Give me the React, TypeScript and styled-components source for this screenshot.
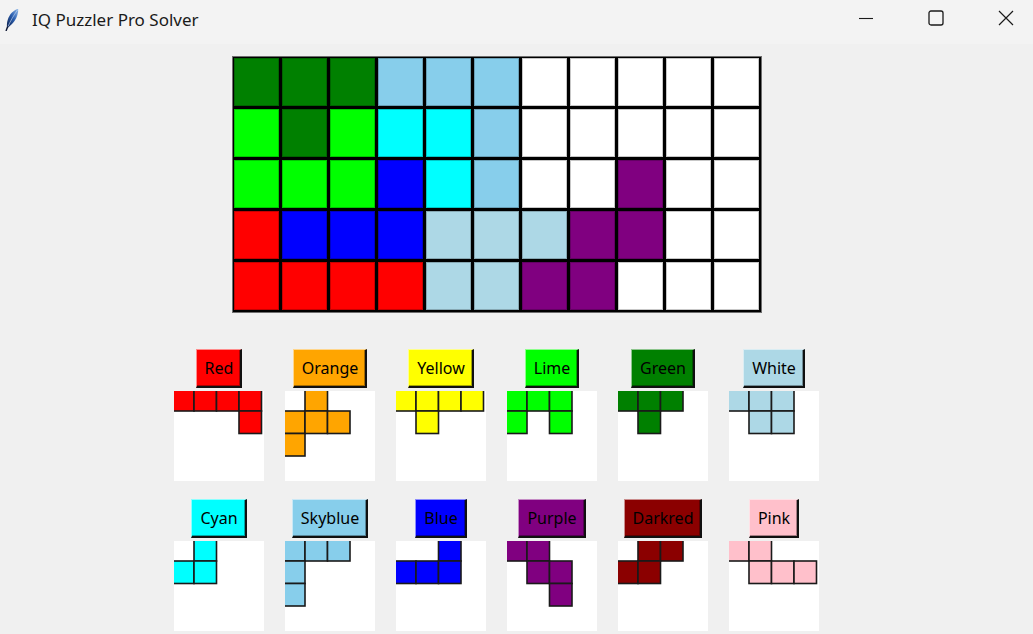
import React from "react";
import styled, { createGlobalStyle } from "styled-components";

const GlobalStyle = createGlobalStyle`
  html, body { margin: 0; padding: 0; }
  body {
    background: #f0f0f0;
    font-family: "Noto Sans", "Open Sans", sans-serif;
    overflow: hidden;
  }
`;

const Window = styled.div`
  width: 1033px;
  height: 634px;
  display: flex;
  flex-direction: column;
  background: #f0f0f0;
  overflow: hidden;
`;

const TitleBar = styled.div`
  height: 44px;
  flex: none;
  display: flex;
  align-items: center;
  background: #f3f3f3;
  overflow: hidden;
`;

const AppIcon = styled.svg`
  width: 16px;
  height: 24px;
  margin-left: 4px;
  margin-right: 12px;
  margin-top: -6px;
  flex: none;
`;

const Title = styled.div`
  font-size: 17px;
  color: #1a1a1a;
  margin-top: -6px;
  flex: 1;
`;

const Captions = styled.div`
  display: flex;
  height: 100%;
  margin-right: -8px;
`;

const CaptionButton = styled.div`
  width: 70px;
  height: 100%;
  display: flex;
  align-items: center;
  justify-content: center;
  padding-bottom: 8px;
  box-sizing: border-box;
`;

const Main = styled.div`
  flex: 1;
  display: flex;
  flex-direction: column;
  align-items: center;
  padding-right: 40px;
  padding-top: 12px;
`;

const Board = styled.div`
  border: 1px solid #6f6f6f;
  background: #000;
  padding: 1px 2px 2px 1px;
  display: grid;
  grid-template-columns: repeat(11, 45px);
  grid-template-rows: repeat(5, 48px);
  gap: 3px;
`;

const Cell = styled.div<{ $c: string }>`
  background: ${(p) => p.$c};
  box-shadow: inset 0 0 0 1px rgba(0, 0, 0, 0.22);
`;

const Pieces = styled.div`
  margin-top: 36px;
  display: flex;
  flex-direction: column;
  gap: 18px;
`;

const PieceRow = styled.div`
  display: flex;
  gap: 21px;
`;

const PieceItem = styled.div`
  width: 90px;
  display: flex;
  flex-direction: column;
  align-items: center;
  gap: 3px;
`;

const ColorButton = styled.div<{ $c: string }>`
  height: 39px;
  box-sizing: border-box;
  padding: 0 7px 0 8px;
  display: flex;
  align-items: center;
  justify-content: center;
  background: ${(p) => p.$c};
  border-style: solid;
  border-width: 1px 2px 2px 1px;
  border-color: rgba(255, 255, 255, 0.55) #101010 #101010 rgba(255, 255, 255, 0.55);
  box-shadow: inset -1px -1px 0 rgba(0, 0, 0, 0.35);
  font-size: 16px;
  color: #000;
  white-space: nowrap;
`;

const Canvas = styled.svg`
  width: 90px;
  height: 90px;
  background: #fff;
  display: block;
`;

const C = {
  red: "#ff0000",
  orange: "#ffa500",
  yellow: "#ffff00",
  lime: "#00ff00",
  green: "#008000",
  lb: "#add8e6",
  cyan: "#00ffff",
  sky: "#87ceeb",
  blue: "#0000ff",
  purple: "#800080",
  dred: "#8b0000",
  pink: "#ffc0cb",
  w: "#ffffff",
};

const boardRows: string[][] = [
  [C.green, C.green, C.green, C.sky, C.sky, C.sky, C.w, C.w, C.w, C.w, C.w],
  [C.lime, C.green, C.lime, C.cyan, C.cyan, C.sky, C.w, C.w, C.w, C.w, C.w],
  [C.lime, C.lime, C.lime, C.blue, C.cyan, C.sky, C.w, C.w, C.purple, C.w, C.w],
  [C.red, C.blue, C.blue, C.blue, C.lb, C.lb, C.lb, C.purple, C.purple, C.w, C.w],
  [C.red, C.red, C.red, C.red, C.lb, C.lb, C.purple, C.purple, C.w, C.w, C.w],
];

type Piece = { name: string; color: string; cells: [number, number][] };

const row1: Piece[] = [
  { name: "Red", color: C.red, cells: [[0, 0], [0, 1], [0, 2], [0, 3], [1, 3]] },
  { name: "Orange", color: C.orange, cells: [[0, 1], [1, 0], [1, 1], [1, 2], [2, 0]] },
  { name: "Yellow", color: C.yellow, cells: [[0, 0], [0, 1], [0, 2], [0, 3], [1, 1]] },
  { name: "Lime", color: C.lime, cells: [[0, 0], [0, 1], [0, 2], [1, 0], [1, 2]] },
  { name: "Green", color: C.green, cells: [[0, 0], [0, 1], [0, 2], [1, 1]] },
  { name: "White", color: C.lb, cells: [[0, 0], [0, 1], [0, 2], [1, 1], [1, 2]] },
];

const row2: Piece[] = [
  { name: "Cyan", color: C.cyan, cells: [[0, 1], [1, 0], [1, 1]] },
  { name: "Skyblue", color: C.sky, cells: [[0, 0], [0, 1], [0, 2], [1, 0], [2, 0]] },
  { name: "Blue", color: C.blue, cells: [[0, 2], [1, 0], [1, 1], [1, 2]] },
  { name: "Purple", color: C.purple, cells: [[0, 0], [0, 1], [1, 1], [1, 2], [2, 2]] },
  { name: "Darkred", color: C.dred, cells: [[0, 1], [0, 2], [1, 0], [1, 1]] },
  { name: "Pink", color: C.pink, cells: [[0, 0], [0, 1], [1, 1], [1, 2], [1, 3]] },
];

const S = 22.5;
const OFF = 2.5;

function PieceView({ p }: { p: Piece }) {
  return (
    <PieceItem>
      <ColorButton $c={p.color}>{p.name}</ColorButton>
      <Canvas viewBox="0 0 90 90">
        {p.cells.map(([r, c], i) => (
          <rect
            key={i}
            x={c * S - OFF}
            y={r * S - OFF}
            width={S}
            height={S}
            fill={p.color}
            stroke="#1a1a1a"
            strokeWidth={1.6}
          />
        ))}
      </Canvas>
    </PieceItem>
  );
}

export default function App() {
  return (
    <Window>
      <GlobalStyle />
      <TitleBar>
        <AppIcon viewBox="0 0 16 24">
          <defs>
            <linearGradient id="fg" x1="0" y1="1" x2="1" y2="0">
              <stop offset="0" stopColor="#0d1f4a" />
              <stop offset="0.55" stopColor="#2b5fb0" />
              <stop offset="1" stopColor="#8fb8ea" />
            </linearGradient>
          </defs>
          <path d="M3.2 21.5 C2.2 16 4 9.5 8 5.5 C10 3.5 12.5 2.2 14.2 2 C14.6 5.5 13 10.5 10.5 14 C8.6 16.8 6 18.6 3.2 21.5 Z" fill="url(#fg)" />
          <path d="M2.2 23.5 L3.6 19.8" stroke="#0b1430" strokeWidth="1.4" strokeLinecap="round" />
          <path d="M4 19.5 C6.5 14 9.5 8.5 13.5 3" stroke="#c9dcf5" strokeWidth="0.6" fill="none" />
        </AppIcon>
        <Title>IQ Puzzler Pro Solver</Title>
        <Captions>
          <CaptionButton>
            <svg width="16" height="16" viewBox="0 0 16 16">
              <path d="M1 8.5 H15" stroke="#1a1a1a" strokeWidth="1.1" />
            </svg>
          </CaptionButton>
          <CaptionButton>
            <svg width="16" height="16" viewBox="0 0 16 16">
              <rect x="1" y="1" width="14" height="14" rx="2" fill="none" stroke="#1a1a1a" strokeWidth="1.3" />
            </svg>
          </CaptionButton>
          <CaptionButton>
            <svg width="16" height="16" viewBox="0 0 16 16">
              <path d="M1 1 L15 15 M15 1 L1 15" stroke="#1a1a1a" strokeWidth="1.2" />
            </svg>
          </CaptionButton>
        </Captions>
      </TitleBar>
      <Main>
        <Board>
          {boardRows.flatMap((row, r) =>
            row.map((c, i) => <Cell key={`${r}-${i}`} $c={c} />)
          )}
        </Board>
        <Pieces>
          <PieceRow>
            {row1.map((p) => (
              <PieceView key={p.name} p={p} />
            ))}
          </PieceRow>
          <PieceRow>
            {row2.map((p) => (
              <PieceView key={p.name} p={p} />
            ))}
          </PieceRow>
        </Pieces>
      </Main>
    </Window>
  );
}
